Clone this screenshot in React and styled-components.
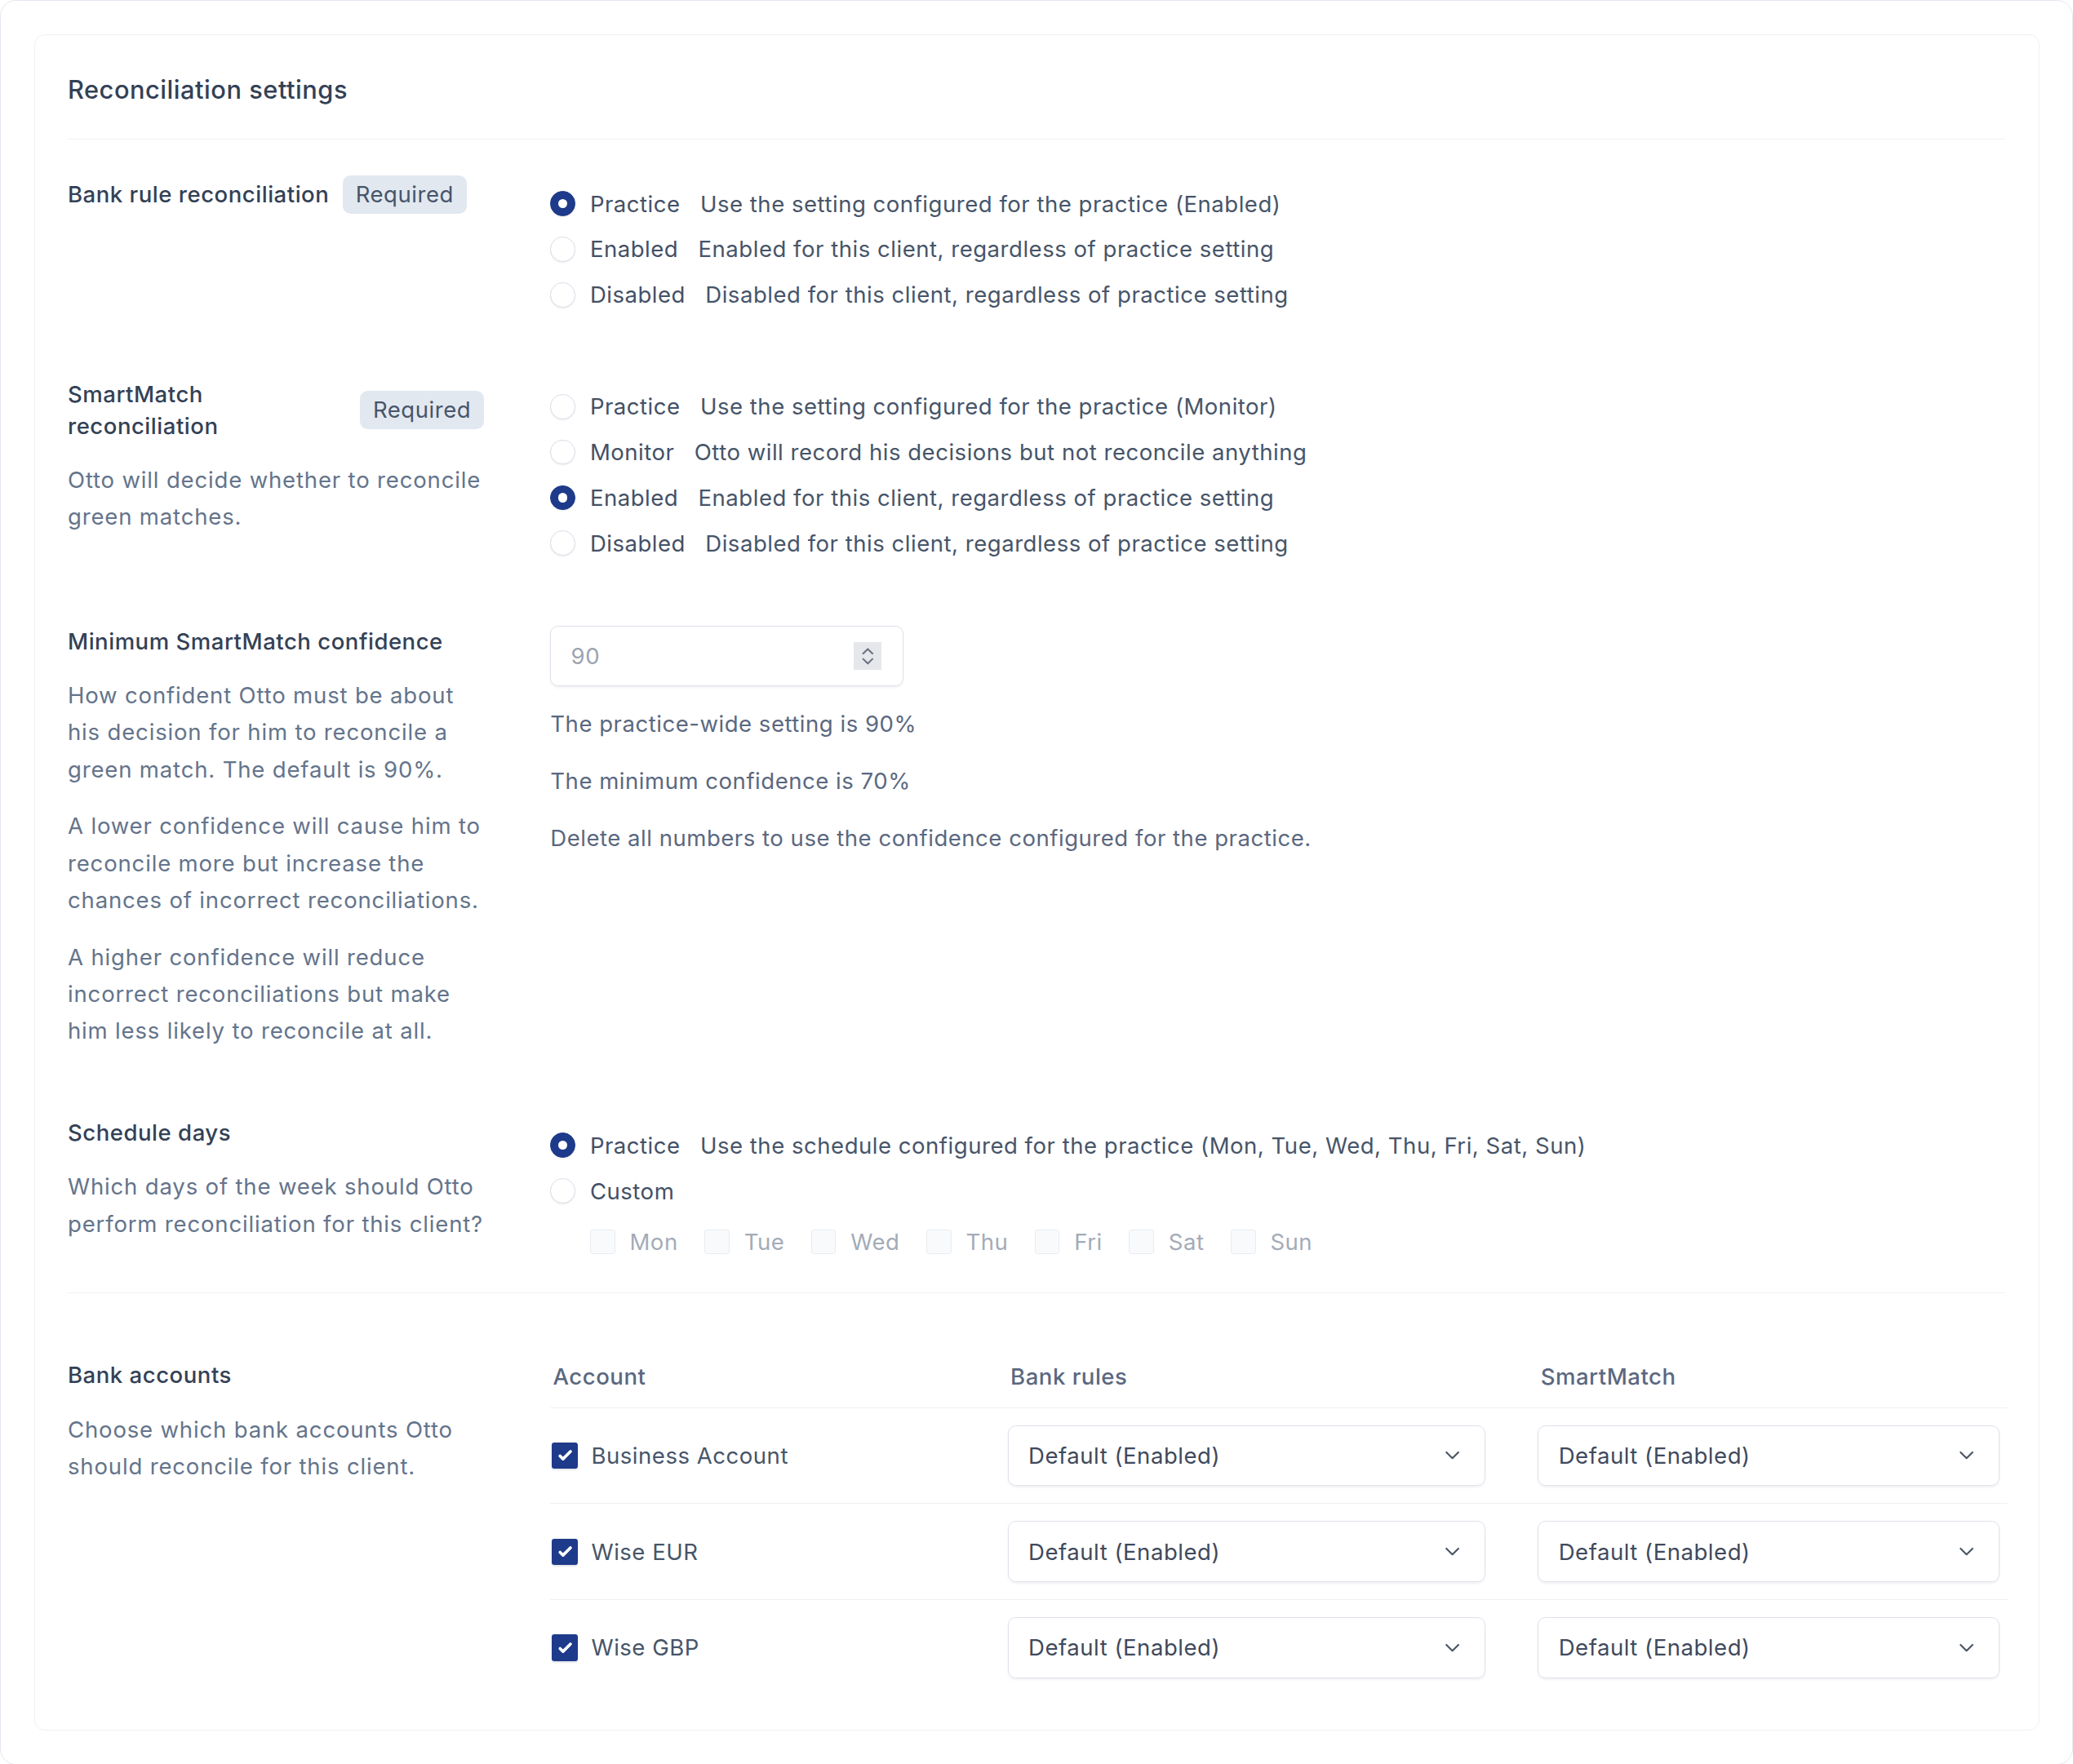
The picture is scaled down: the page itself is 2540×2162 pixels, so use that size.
import styled, { createGlobalStyle } from "styled-components";
import { ChevronDown } from "lucide-react";

const GlobalStyle = createGlobalStyle`
  body {
    margin: 0;
    background: #ffffff;
    font-family: Inter, "Noto Sans", "Liberation Sans", sans-serif;
  }
`;

const Page = styled.div`
  zoom: 1.62;
  width: 1568px;
  height: 1335px;
  box-sizing: border-box;
  padding: 25px;
  border: 1px solid #e3e8ef;
  border-radius: 12px;
  background: #ffffff;
  letter-spacing: 0.02em;
`;

const Card = styled.div`
  height: 100%;
  box-sizing: border-box;
  border: 1px solid #eef1f5;
  border-radius: 8px;
  padding: 0 25px;
  background: #ffffff;
`;

const Header = styled.div`
  padding: 30px 0 25px;
  border-bottom: 1px solid #eef1f5;
  font-size: 19px;
  line-height: 24px;
  font-weight: 500;
  color: #334155;
`;

const Sections = styled.div`
  padding-top: 27px;
`;

const Section = styled.div`
  display: grid;
  grid-template-columns: 315px 1fr;
  column-gap: 50px;
  margin-top: ${({ $top }) => $top || 0}px;
`;

const TitleRow = styled.div`
  display: flex;
  align-items: center;
  gap: 10px;
`;

const Title = styled.div`
  font-size: 17px;
  line-height: 24px;
  font-weight: 500;
  color: #334155;
`;

const Badge = styled.span`
  flex-shrink: 0;
  height: 29px;
  line-height: 29px;
  padding: 0 10px;
  border-radius: 6px;
  background: #e2e8f0;
  color: #475569;
  font-size: 17px;
`;

const Desc = styled.p`
  margin: 15px 0 0;
  font-size: 17px;
  line-height: 28px;
  letter-spacing: 0.03em;
  color: #64748b;
`;

const RadioList = styled.div`
  display: flex;
  flex-direction: column;
  padding-top: 4px;
`;

const RadioRow = styled.label`
  display: flex;
  align-items: center;
  height: 34.5px;
  font-size: 17px;
  color: #475569;
`;

const RadioDot = styled.span`
  width: 19px;
  height: 19px;
  box-sizing: border-box;
  flex-shrink: 0;
  border-radius: 50%;
  display: grid;
  place-items: center;
  margin-right: 11px;
  background: ${({ $checked }) => ($checked ? "#1e3a8a" : "#ffffff")};
  border: 1px solid ${({ $checked }) => ($checked ? "#1e3a8a" : "#d8dee7")};
  box-shadow: 0 1px 1px rgba(15, 23, 42, 0.06);

  &::after {
    content: "";
    display: ${({ $checked }) => ($checked ? "block" : "none")};
    width: 7px;
    height: 7px;
    border-radius: 50%;
    background: #ffffff;
  }
`;

const RadioName = styled.span`
  color: #445066;
`;

const RadioHint = styled.span`
  margin-left: 15px;
  color: #475569;
`;

const DaysRow = styled.div`
  display: flex;
  align-items: center;
  gap: 20px;
  height: 34.5px;
  padding: 4px 0 0 30px;
`;

const Day = styled.span`
  display: flex;
  align-items: center;
  gap: 11px;
  font-size: 17px;
  color: #a3abb8;
`;

const DayBox = styled.span`
  width: 19px;
  height: 19px;
  box-sizing: border-box;
  border: 1px solid #e8ecf1;
  border-radius: 2px;
  background: #f8fafc;
`;

const NumberField = styled.div`
  width: 267px;
  height: 46px;
  box-sizing: border-box;
  display: flex;
  align-items: center;
  justify-content: space-between;
  padding: 0 16px 0 15px;
  border: 1px solid #dde2ea;
  border-radius: 6px;
  box-shadow: 0 1px 2px rgba(15, 23, 42, 0.06);
  font-size: 17px;
  color: #9ca3af;
`;

const Spinner = styled.span`
  width: 21px;
  height: 21px;
  display: flex;
  flex-direction: column;
  align-items: center;
  justify-content: center;
  gap: 2px;
  background: #e6e7eb;
`;

const Help = styled.p`
  margin: 15px 0 0;
  font-size: 17px;
  line-height: 28px;
  color: #5b6880;
`;

const Divider = styled.div`
  height: 1px;
  background: #eef1f5;
  margin: 21px 0 50px;
`;

const Table = styled.div`
  display: flex;
  flex-direction: column;
`;

const TableRow = styled.div`
  display: grid;
  grid-template-columns: 306px 361px 349px;
  column-gap: 40px;
  align-items: center;
  height: ${({ $head }) => ($head ? "auto" : "72px")};
  padding: ${({ $head }) => ($head ? "1px 0 11px" : "0")};
  border-bottom: ${({ $last }) => ($last ? "none" : "1px solid #eef1f5")};
  margin-right: -2px;
`;

const HeadCell = styled.div`
  padding-left: 2px;
  font-size: 17px;
  line-height: 24px;
  font-weight: 500;
  color: #5b6880;
`;

const AccountCell = styled.div`
  display: flex;
  align-items: center;
  gap: 10px;
  padding-left: 1px;
  font-size: 17px;
  color: #475569;
`;

const CheckBox = styled.span`
  width: 20px;
  height: 20px;
  display: grid;
  place-items: center;
  border-radius: 2px;
  background: #1e3a8a;
  box-shadow: 0 1px 1px rgba(15, 23, 42, 0.1);
`;

const Select = styled.div`
  height: 46px;
  box-sizing: border-box;
  display: flex;
  align-items: center;
  justify-content: space-between;
  padding: 0 15px 0 15px;
  border: 1px solid #dde2ea;
  border-radius: 6px;
  box-shadow: 0 1px 2px rgba(15, 23, 42, 0.06);
  font-size: 17px;
  color: #3f4a5c;
`;

function Radio({ name, hint, checked }) {
  return (
    <RadioRow>
      <RadioDot $checked={checked} />
      <RadioName>{name}</RadioName>
      {hint && <RadioHint>{hint}</RadioHint>}
    </RadioRow>
  );
}

function Chevron({ up }) {
  return (
    <svg width="9" height="6" viewBox="0 0 9 6" fill="none">
      <path
        d={up ? "M1 5L4.5 1.5L8 5" : "M1 1L4.5 4.5L8 1"}
        stroke="#6b7280"
        strokeWidth="1.3"
        strokeLinecap="round"
        strokeLinejoin="round"
      />
    </svg>
  );
}

const days = ["Mon", "Tue", "Wed", "Thu", "Fri", "Sat", "Sun"];
const accounts = ["Business Account", "Wise EUR", "Wise GBP"];

export default function App() {
  return (
    <>
      <GlobalStyle />
      <Page>
        <Card>
          <Header>Reconciliation settings</Header>
          <Sections>
            <Section>
              <div>
                <TitleRow>
                  <Title>Bank rule reconciliation</Title>
                  <Badge>Required</Badge>
                </TitleRow>
              </div>
              <RadioList>
                <Radio checked name="Practice" hint="Use the setting configured for the practice (Enabled)" />
                <Radio name="Enabled" hint="Enabled for this client, regardless of practice setting" />
                <Radio name="Disabled" hint="Disabled for this client, regardless of practice setting" />
              </RadioList>
            </Section>

            <Section $top={46}>
              <div>
                <TitleRow>
                  <Title>SmartMatch reconciliation</Title>
                  <Badge>Required</Badge>
                </TitleRow>
                <Desc>Otto will decide whether to reconcile green matches.</Desc>
              </div>
              <RadioList>
                <Radio name="Practice" hint="Use the setting configured for the practice (Monitor)" />
                <Radio name="Monitor" hint="Otto will record his decisions but not reconcile anything" />
                <Radio checked name="Enabled" hint="Enabled for this client, regardless of practice setting" />
                <Radio name="Disabled" hint="Disabled for this client, regardless of practice setting" />
              </RadioList>
            </Section>

            <Section $top={45}>
              <div>
                <Title>Minimum SmartMatch confidence</Title>
                <Desc>How confident Otto must be about his decision for him to reconcile a green match. The default is 90%.</Desc>
                <Desc>A lower confidence will cause him to reconcile more but increase the chances of incorrect reconciliations.</Desc>
                <Desc>A higher confidence will reduce incorrect reconciliations but make him less likely to reconcile at all.</Desc>
              </div>
              <div>
                <NumberField>
                  <span>90</span>
                  <Spinner>
                    <Chevron up />
                    <Chevron />
                  </Spinner>
                </NumberField>
                <Help>The practice-wide setting is 90%</Help>
                <Help>The minimum confidence is 70%</Help>
                <Help>Delete all numbers to use the confidence configured for the practice.</Help>
              </div>
            </Section>

            <Section $top={51}>
              <div>
                <Title>Schedule days</Title>
                <Desc>Which days of the week should Otto perform reconciliation for this client?</Desc>
              </div>
              <RadioList>
                <Radio checked name="Practice" hint="Use the schedule configured for the practice (Mon, Tue, Wed, Thu, Fri, Sat, Sun)" />
                <Radio name="Custom" />
                <DaysRow>
                  {days.map((d) => (
                    <Day key={d}>
                      <DayBox />
                      {d}
                    </Day>
                  ))}
                </DaysRow>
              </RadioList>
            </Section>
          </Sections>

          <Divider />

          <Section>
            <div>
              <Title>Bank accounts</Title>
              <Desc>Choose which bank accounts Otto should reconcile for this client.</Desc>
            </div>
            <Table>
              <TableRow $head>
                <HeadCell>Account</HeadCell>
                <HeadCell>Bank rules</HeadCell>
                <HeadCell>SmartMatch</HeadCell>
              </TableRow>
              {accounts.map((a, i) => (
                <TableRow key={a} $last={i === accounts.length - 1}>
                  <AccountCell>
                    <CheckBox>
                      <svg width="18" height="18" viewBox="0 0 16 16" fill="#ffffff">
                        <path d="M12.207 4.793a1 1 0 010 1.414l-5 5a1 1 0 01-1.414 0l-2-2a1 1 0 011.414-1.414L6.5 9.086l4.293-4.293a1 1 0 011.414 0z" />
                      </svg>
                    </CheckBox>
                    {a}
                  </AccountCell>
                  <Select>
                    Default (Enabled)
                    <ChevronDown size={18} color="#4b5563" strokeWidth={1.75} />
                  </Select>
                  <Select>
                    Default (Enabled)
                    <ChevronDown size={18} color="#4b5563" strokeWidth={1.75} />
                  </Select>
                </TableRow>
              ))}
            </Table>
          </Section>
        </Card>
      </Page>
    </>
  );
}
